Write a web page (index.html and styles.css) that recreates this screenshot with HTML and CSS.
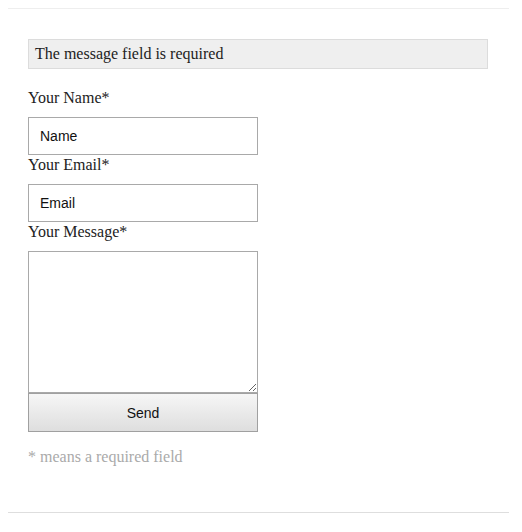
FILE: index.html
```html
<!DOCTYPE html>
<html>
<head>
<meta charset="utf-8">
<link rel="stylesheet" href="styles.css">
</head>
<body>
<div class="wrap">
  <div class="error">The message field is required</div>
  <form class="form">
    <label class="label">Your Name*</label>
    <input class="field" type="text" value="Name">
    <label class="label">Your Email*</label>
    <input class="field" type="text" value="Email">
    <label class="label">Your Message*</label>
    <textarea class="area"></textarea>
    <button class="send" type="button">Send</button>
  </form>
  <p class="note">* means a required field</p>
</div>
</body>
</html>
```
FILE: styles.css
```css
html, body {
  margin: 0;
  background: #fff;
}
body {
  font-family: "Liberation Serif", "Times New Roman", serif;
  font-size: 16px;
  color: #222;
}
.wrap {
  margin: 8px 0 0 8px;
  width: 461px;
  padding: 30px 20px 46px 20px;
  border-top: 1px solid #eee;
  border-bottom: 1px solid #dedede;
}
.error {
  width: 446px;
  padding: 5px 6px;
  line-height: 18px;
  background: #efefef;
  border: 1px solid #dcdcdc;
}
.form {
  display: flex;
  flex-direction: column;
  align-items: flex-start;
  margin-top: 20px;
}
.label {
  display: block;
  line-height: 18px;
  margin-bottom: 10px;
}
.field {
  box-sizing: border-box;
  width: 230px;
  height: 38px;
  margin: 0;
  padding: 0 11px;
  border: 1px solid #a9a9a9;
  font-family: "Liberation Sans", Arial, sans-serif;
  font-size: 14px;
  color: #111;
  outline: none;
}
.field + .label { margin-top: 1px; }
.area {
  box-sizing: border-box;
  width: 230px;
  height: 142px;
  margin: 0;
  padding: 4px;
  border: 1px solid #a9a9a9;
  font-family: "Liberation Sans", Arial, sans-serif;
  font-size: 14px;
}
.send {
  box-sizing: border-box;
  width: 230px;
  height: 39px;
  margin: 0;
  border: 1px solid #a0a0a0;
  border-radius: 0;
  background: linear-gradient(#f6f6f6, #dedede);
  font-family: "Liberation Sans", Arial, sans-serif;
  font-size: 14px;
  color: #111;
}
.note {
  margin: 16px 0 0 0;
  line-height: 18px;
  color: #aaa;
}
```
